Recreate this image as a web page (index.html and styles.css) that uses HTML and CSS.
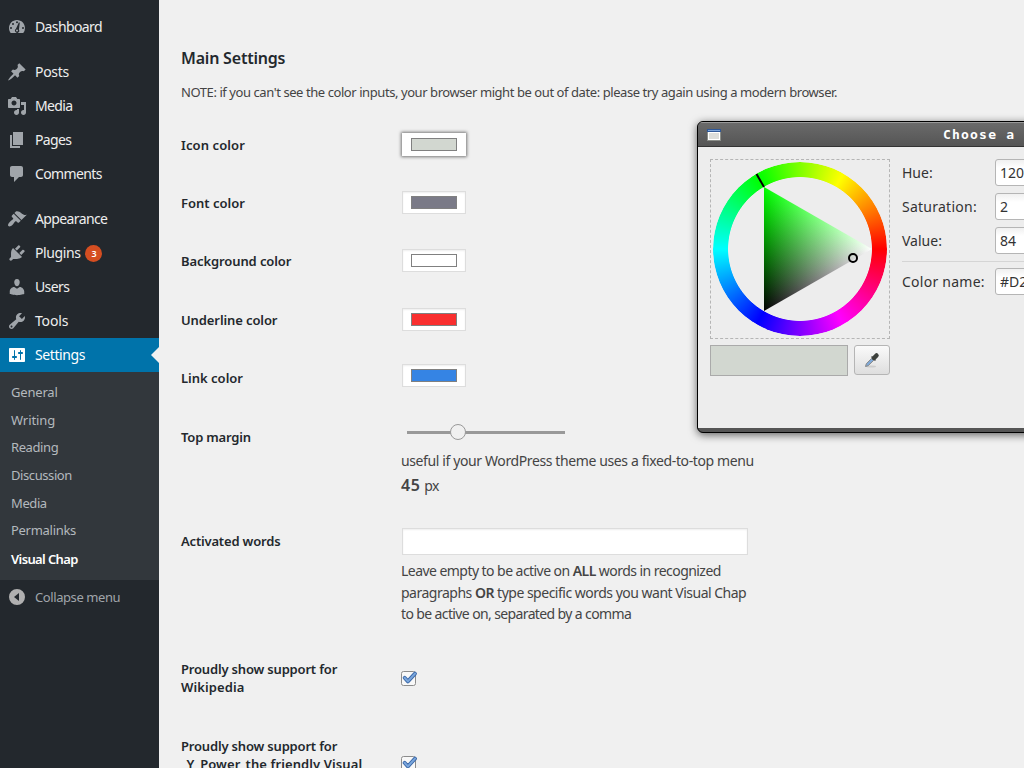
FILE: index.html
```html
<!DOCTYPE html>
<html lang="en">
<head>
<meta charset="utf-8">
<title>Visual Chap Settings</title>
<link rel="stylesheet" href="styles.css">
</head>
<body>
<div class="app">
<nav class="sidebar">
  <ul class="menu">
    <li class="item"><svg viewBox="0 0 20 20"><path fill-rule="evenodd" d="M3.76 16h12.48A7.95 7.95 0 0 0 18 11c0-4.42-3.58-8-8-8s-8 3.58-8 8c0 1.89.66 3.63 1.76 5zM9 5.2a1 1 0 1 1 2 0 1 1 0 0 1-2 0zM5 7a1 1 0 1 1 2 0 1 1 0 0 1-2 0zM3 11a1 1 0 1 1 2 0 1 1 0 0 1-2 0zM15 11a1 1 0 1 1 2 0 1 1 0 0 1-2 0zM11.900 5.300l.9.4-.9 6.700a2.200 2.200 0 1 1-2.900-.6zM9 13.600a1 1 0 1 0 2 0 1 1 0 0 0-2 0z"/></svg><span class="k6">Dashboard</span></li>
    <li class="item gap"><svg viewBox="0 0 20 20"><path d="M10.44 3.02l1.82-1.82 6.36 6.35-1.83 1.82c-1.05-.68-2.48-.57-3.41.36l-.75.75c-.92.93-1.04 2.35-.35 3.41l-1.83 1.82-2.41-2.41-2.8 2.79c-.42.42-3.38 2.71-3.8 2.29s1.86-3.39 2.28-3.81l2.79-2.79L4.1 9.36l1.83-1.82c1.05.69 2.48.57 3.4-.36l.75-.75c.93-.92 1.05-2.35.36-3.41z"/></svg><span class="k3">Posts</span></li>
    <li class="item"><svg viewBox="0 0 20 20"><path d="M13 11V4c0-.55-.45-1-1-1h-1.67L9 1H5L3.67 3H2c-.55 0-1 .45-1 1v7c0 .55.45 1 1 1h10c.55 0 1-.45 1-1zM7 4.5c1.38 0 2.5 1.12 2.5 2.5S8.38 9.5 7 9.5 4.5 8.38 4.5 7 5.62 4.5 7 4.5zM14 6h5v10.5c0 1.38-1.12 2.5-2.5 2.5S14 17.88 14 16.5s1.12-2.5 2.5-2.5c.17 0 .34.02.5.05V9h-3V6zm-4 8.05V13h2v3.5c0 1.38-1.12 2.5-2.5 2.5S7 17.88 7 16.5 8.12 14 9.5 14c.17 0 .34.02.5.05z"/></svg><span class="k6">Media</span></li>
    <li class="item"><svg viewBox="0 0 20 20"><path d="M6 15V2h10v13H6zm-1 1h8v2H3V5h2v11z"/></svg><span class="k6">Pages</span></li>
    <li class="item"><svg viewBox="0 0 20 20"><path d="M5 2h9c1.1 0 2 .9 2 2v7c0 1.1-.9 2-2 2h-2l-5 5v-5H5c-1.1 0-2-.9-2-2V4c0-1.1.9-2 2-2z"/></svg><span class="k6">Comments</span></li>
    <li class="item gap"><svg viewBox="0 0 20 20"><path d="M14.48 11.06L7.41 3.99l1.5-1.5c.5-.56 2.3-.47 3.51.32 1.21.8 1.43 1.28 2.91 2.1 1.18.64 2.45 1.26 4.45.85zm-.71.71L6.7 4.7 4.93 6.47c-.39.39-.39 1.02 0 1.41l1.06 1.06c.39.39.39 1.03 0 1.42-.6.6-1.43 1.11-2.21 1.69-.35.26-.7.53-1.01.84C1.43 14.23.4 16.08 1.4 17.07c.99 1 2.84-.03 4.18-1.36.31-.31.58-.66.85-1.02.57-.78 1.08-1.61 1.69-2.21.39-.39 1.02-.39 1.41 0l1.06 1.06c.39.39 1.02.39 1.41 0z"/></svg><span class="k6">Appearance</span></li>
    <li class="item"><svg viewBox="0 0 20 20"><path d="M13.11 4.36L9.87 7.6 8 5.73l3.24-3.24c.35-.34 1.05-.2 1.56.32.52.51.66 1.21.31 1.55zm-8 1.77l.91-1.12 9.01 9.01-1.19.84c-.71.71-2.63 1.16-3.82 1.16H6.14L4.9 17.26c-.59.59-1.54.59-2.12 0-.59-.58-.59-1.53 0-2.12l1.24-1.24v-3.88c0-1.13.4-3.19 1.09-3.89zm7.26 3.97l3.24-3.24c.34-.35 1.04-.21 1.55.31.52.51.66 1.21.31 1.55l-3.24 3.25z"/></svg><span class="k4">Plugins</span><b class="count">3</b></li>
    <li class="item"><svg viewBox="0 0 20 20"><path d="M10 9.25c-2.27 0-2.73-3.44-2.73-3.44C7 4.02 7.82 2 9.97 2c2.16 0 2.98 2.02 2.71 3.81 0 0-.41 3.44-2.68 3.44zm0 2.57L12.72 10c2.39 0 4.52 2.33 4.52 4.53v2.49s-3.65 1.13-7.24 1.13c-3.65 0-7.24-1.13-7.24-1.13v-2.49c0-2.25 1.94-4.48 4.47-4.48z"/></svg><span class="k6">Users</span></li>
    <li class="item"><svg viewBox="0 0 20 20"><path d="M16.68 9.77c-1.34 1.34-3.3 1.67-4.95.99l-5.41 6.52c-.99.99-2.59.99-3.58 0s-.99-2.59 0-3.57l6.52-5.42c-.68-1.65-.35-3.61.99-4.95 1.28-1.28 3.12-1.62 4.72-1.06l-2.89 2.89 2.82 2.82 2.86-2.87c.53 1.58.18 3.39-1.08 4.65zM3.81 16.21c.4.39 1.04.39 1.43 0 .4-.4.4-1.04 0-1.43-.39-.4-1.03-.4-1.43 0-.39.39-.39 1.03 0 1.43z"/></svg><span class="k2">Tools</span></li>
    <li class="item current"><svg viewBox="0 0 20 20"><path d="M18 16V4c0-.55-.45-1-1-1H3c-.55 0-1 .45-1 1v12c0 .55.45 1 1 1h14c.55 0 1-.45 1-1zM8 11h1c.55 0 1 .45 1 1s-.45 1-1 1H8v1.5c0 .28-.22.5-.5.5s-.5-.22-.5-.5V13H6c-.55 0-1-.45-1-1s.45-1 1-1h1V5.5c0-.28.22-.5.5-.5s.5.22.5.5V11zm5-2h-1c-.55 0-1-.45-1-1s.45-1 1-1h1V5.5c0-.28.22-.5.5-.5s.5.22.5.5V7h1c.55 0 1 .45 1 1s-.45 1-1 1h-1v5.5c0 .28-.22.5-.5.5s-.5-.22-.5-.5V9z"/></svg><span class="k4">Settings</span></li>
  </ul>
  <ul class="submenu">
    <li class="k2">General</li>
    <li class="k1">Writing</li>
    <li class="k4">Reading</li>
    <li class="k4">Discussion</li>
    <li class="k4">Media</li>
    <li class="k3">Permalinks</li>
    <li class="k6 active">Visual Chap</li>
  </ul>
  <div class="collapse"><svg viewBox="0 0 20 20"><path fill-rule="evenodd" d="M10 2a8 8 0 1 0 0 16 8 8 0 0 0 0-16zM12 6v8l-5-4z"/></svg><span class="k4">Collapse menu</span></div>
</nav>

<main class="content">
  <h2>Main Settings</h2>
  <p class="note">NOTE: if you can't see the color inputs, your browser might be out of date: please try again using a modern browser.</p>

  <div class="row"><label class="wide">Icon color</label><div class="color focused"><i class="swatch icon-c"></i></div></div>
  <div class="row"><label class="k0">Font color</label><div class="color"><i class="swatch font-c"></i></div></div>
  <div class="row odd"><label class="k1">Background color</label><div class="color"><i class="swatch bg-c"></i></div></div>
  <div class="row"><label class="k1">Underline color</label><div class="color"><i class="swatch line-c"></i></div></div>
  <div class="row odd"><label class="k0">Link color</label><div class="color raised"><i class="swatch link-c"></i></div></div>
  <div class="row margin-row"><label class="k2">Top margin</label>
    <div class="field">
      <div class="range"><i class="knob"></i></div>
      <p class="hint">useful if your WordPress theme uses a fixed-to-top menu</p>
      <p class="value"><b>45</b> <span class="k4">px</span></p>
    </div>
  </div>
  <div class="row words-row"><label class="k2">Activated words</label>
    <div class="field">
      <div class="textbox"></div>
      <p class="desc">Leave empty to be active on <b>ALL</b> words in recognized<br><span class="k5">paragraphs <b>OR</b> type specific words you want Visual Chap</span><br><span class="k6">to be active on, separated by a comma</span></p>
    </div>
  </div>
  <div class="row wiki-row"><label><span class="k2">Proudly show support for</span><br><span class="wide">Wikipedia</span></label>
    <svg class="check" viewBox="0 0 17 17"><rect x=".5" y="1.5" width="14" height="14" rx="2" fill="#f8f8f8" stroke="#8c8c8c"/><path d="M3.6 7.8l3.3 3.6L14 3.6" fill="none" stroke="#3b68a8" stroke-width="3.800" stroke-linecap="round" stroke-linejoin="round"/><path d="M3.6 7.8l3.3 3.6L14 3.6" fill="none" stroke="#7aa6dc" stroke-width="2" stroke-linecap="round" stroke-linejoin="round"/></svg>
  </div>
  <div class="row power-row"><label><span class="k2">Proudly show support for</span><br><span class="wide">_Y_Power, the friendly Visual</span></label>
    <svg class="check" viewBox="0 0 17 17"><rect x=".5" y="1.5" width="14" height="14" rx="2" fill="#f8f8f8" stroke="#8c8c8c"/><path d="M3.6 7.8l3.3 3.6L14 3.6" fill="none" stroke="#3b68a8" stroke-width="3.800" stroke-linecap="round" stroke-linejoin="round"/><path d="M3.6 7.8l3.3 3.6L14 3.6" fill="none" stroke="#7aa6dc" stroke-width="2" stroke-linecap="round" stroke-linejoin="round"/></svg>
  </div>
</main>

<section class="dialog">
  <header class="titlebar">
    <svg viewBox="0 0 14 12"><rect width="14" height="12" fill="#8a8d88"/><rect x="1" y="1" width="12" height="10" fill="#fff"/><rect x="2" y="4" width="10" height="6" fill="#dcddda"/><rect width="14" height="3" fill="#2f5796"/><rect x="1" y="1" width="12" height="1" fill="#7ba3d8"/></svg>
    <span class="title">Choose a</span>
  </header>
  <div class="dialog-body">
    <div class="picker">
      <div class="wheel-box">
        <div class="wheel"></div>
        <svg class="triangle" viewBox="0 0 180 180">
          <defs>
            <linearGradient id="tint" gradientUnits="userSpaceOnUse" x1="54" y1="0" x2="162" y2="0"><stop offset="0" stop-color="#000"/><stop offset="1" stop-color="#fff"/></linearGradient>
            <linearGradient id="hue" gradientUnits="userSpaceOnUse" x1="108" y1="121" x2="54" y2="28"><stop offset="0" stop-color="#000"/><stop offset="1" stop-color="#0f0"/></linearGradient>
            <clipPath id="tri"><path d="M54 28L162 90 54 152z"/></clipPath>
          </defs>
          <g clip-path="url(#tri)"><g class="blend"><rect x="50" y="24" width="116" height="132" fill="url(#tint)"/><rect class="add" x="50" y="24" width="116" height="132" fill="url(#hue)"/></g></g>
          <path d="M46.5 15L54 28" stroke="#000" stroke-width="2"/>
          <circle cx="143" cy="99" r="4" fill="none" stroke="#000" stroke-width="2"/>
        </svg>
      </div>
      <div class="tools">
        <div class="preview"></div>
        <div class="dropper"><svg viewBox="0 0 18 18"><ellipse cx="8" cy="15.500" rx="5" ry="1" fill="#ccc"/><path d="M2.500 15.500l.8-2.700L8.500 7.500l2 2L5.200 14.700z" fill="#7fa9d8" stroke="#888" stroke-width="1"/><path d="M8.500 5.500l4 4" stroke="#555" stroke-width="1.600"/><path d="M11 7L13.500 4.500" stroke="#3c403c" stroke-width="4.500" stroke-linecap="round"/></svg></div>
      </div>
    </div>
    <div class="values">
      <div class="line"><span>Hue:</span><div class="entry">120</div></div>
      <div class="line"><span class="loose">Saturation:</span><div class="entry">2</div></div>
      <div class="line"><span>Value:</span><div class="entry">84</div></div>
      <div class="line last"><span class="loose">Color name:</span><div class="entry">#D2</div></div>
    </div>
  </div>
</section>
</div>
</body>
</html>
```

FILE: styles.css
```css
* { box-sizing: border-box; }
body { margin: 0; background: #f0f0f0; color: #444; font: 14px/20px "Noto Sans", "Open Sans", sans-serif; }
ul, p, h2 { margin: 0; padding: 0; list-style: none; }
svg { display: block; flex: none; }
.app { position: relative; display: flex; width: 1024px; height: 768px; overflow: hidden; }

/* letter tracking steps */
.wide { letter-spacing: .1px; }
.k0 { letter-spacing: 0; }
.k1 { letter-spacing: -.1px; }
.k2 { letter-spacing: -.18px; }
.k3 { letter-spacing: -.29px; }
.k4 { letter-spacing: -.41px; }
.k5 { letter-spacing: -.5px; }
.k6 { letter-spacing: -.62px; }

.sidebar { width: 159px; flex: none; background: #23282d; }
.menu { padding-top: 10px; }
.item { display: flex; align-items: center; height: 34px; padding-left: 7px; color: #eee; }
.item svg, .collapse svg { width: 20px; height: 20px; margin-right: 8px; fill: #a0a5aa; }
.item.gap { margin-top: 11px; }
.item.current { position: relative; background: #0073aa; color: #fff; }
.item.current svg { fill: #fff; }
.item.current::after { content: ""; position: absolute; right: 0; top: 9px; border: 8px solid transparent; border-left: 0; border-right-color: #f0f0f0; }
.count { width: 17px; height: 17px; margin-left: 5px; border-radius: 50%; background: #d54e21; color: #fff; font-size: 9px; line-height: 17px; text-align: center; font-weight: 600; }
.submenu { height: 208px; padding: 7px 0 0 11px; background: #32373c; color: #b4b9be; font-size: 13px; }
.submenu li { height: 27.700px; line-height: 27px; }
.submenu .active { color: #fff; font-weight: 600; line-height: 29px; }
.collapse { display: flex; align-items: center; height: 34px; padding-left: 7px; color: #a0a5aa; font-size: 13px; }
.collapse svg { fill: #b0b0b0; }

.content { flex: 1; padding: 48px 0 0 22px; }
.content h2 { height: 34px; color: #23282d; font-size: 16px; line-height: 20px; font-weight: 600; letter-spacing: -.2px; }
.note { height: 34px; font-size: 13px; line-height: 20px; letter-spacing: -.428px; white-space: nowrap; }
.row { display: grid; grid-template-columns: 220px 353px; height: 58px; }
.row.odd { height: 59px; }
.row label { padding-top: 20px; color: #23282d; font-size: 13px; line-height: 18px; font-weight: 600; white-space: nowrap; }
.color { width: 64px; height: 23px; margin: 17px 0 0 1px; padding: 4px 8px; border: 1px solid #ddd; background: #fff; box-shadow: inset 0 1px 2px rgba(0,0,0,.07); }
.color.raised { margin-top: 15px; }
.color.focused { border-color: #fff; box-shadow: 0 0 3px 1px #777; }
.swatch { display: block; width: 46px; height: 13px; border: 1px solid #808080; }
.icon-c { background: #d2d7d0; }
.font-c { background: #7a7a87; }
.bg-c { background: #fff; }
.line-c { background: #f92f2f; }
.link-c { background: #3584e4; }
.margin-row { height: 104px; }
.range { width: 158px; height: 3px; margin: 23px 0 0 6px; background: #999; }
.knob { display: block; position: relative; left: 43px; top: -7px; width: 16px; height: 16px; border: 1px solid #999; border-radius: 50%; background: #f0f0f0; }
.hint { margin-top: 17px; letter-spacing: -.385px; white-space: nowrap; }
.value { margin-top: 4px; }
.value b { font-size: 16px; letter-spacing: .6px; }
b { font-weight: 600; }
.words-row { height: 128px; }
.textbox { width: 346px; height: 27px; margin: 16px 0 5px 1px; border: 1px solid #ddd; background: #fff; box-shadow: inset 0 1px 2px rgba(0,0,0,.07); }
.desc { line-height: 21.600px; letter-spacing: -.55px; white-space: nowrap; }
.wiki-row { height: 77px; }
.power-row { height: 51px; }
.check { width: 17px; height: 17px; margin-top: 30px; }
.power-row .check { margin-top: 38px; }

.dialog { position: absolute; left: 697px; top: 121px; width: 344px; height: 312px; border: 1px solid #000; border-radius: 6px; background: #555; box-shadow: 0 2px 8px rgba(0,0,0,.6); overflow: hidden; font: 14px/20px "Noto Sans", sans-serif; color: #333; }
.titlebar { display: flex; align-items: center; height: 25px; padding-left: 9px; border-top: 1px solid #999; border-bottom: 1px solid #333; background: linear-gradient(#6a6a6a, #555); }
.titlebar svg { width: 14px; height: 12px; }
.title { margin-left: 222px; color: #fff; font: bold 13px/20px "DejaVu Sans Mono", monospace; letter-spacing: 1.200px; white-space: nowrap; }
.dialog-body { display: flex; height: 281px; padding: 12px 0 0 12px; background: #ededed; }
.picker { width: 180px; }
.wheel-box { position: relative; width: 180px; height: 180px; border: 1px dashed #b5b5b5; }
.wheel { width: 174px; height: 174px; margin: 2px; border-radius: 50%; background: conic-gradient(from 90deg, red, magenta, blue, cyan, lime, yellow, red); mask: radial-gradient(circle, transparent 71.500px, #000 72.300px); }
.triangle { position: absolute; left: -1px; top: -1px; width: 180px; height: 180px; }
.blend { isolation: isolate; }
.add { mix-blend-mode: plus-lighter; }
.tools { display: flex; justify-content: space-between; margin-top: 6px; }
.preview { width: 138px; height: 31px; border: 1px solid #aaa; background: #d2d7d0; }
.dropper { display: grid; place-items: center; width: 36px; height: 30px; border: 1px solid #b5b5b5; border-radius: 3px; background: linear-gradient(#fafafa, #dedede); }
.dropper svg { width: 18px; height: 18px; }
.values { margin-left: 12px; }
.line { display: grid; grid-template-columns: 93px 60px; height: 34px; line-height: 28px; white-space: nowrap; }
.line.last { padding-top: 6px; border-top: 1px solid #d5d5d5; height: 42px; }
.loose { letter-spacing: .25px; }
.entry { height: 27px; padding-left: 4px; border: 1px solid #b5b5b5; border-radius: 3px; background: linear-gradient(#f0f0f0, #fff 8px); line-height: 26px; }
```
